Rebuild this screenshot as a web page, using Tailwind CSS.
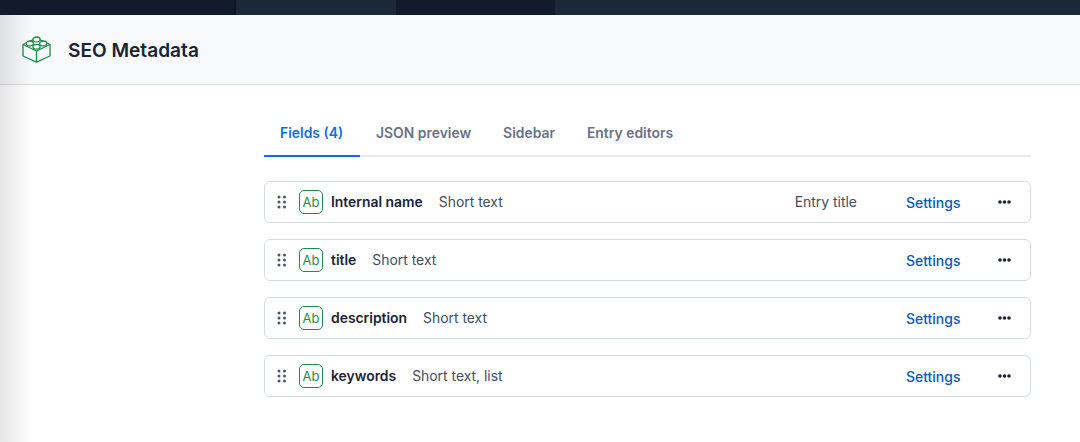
<!DOCTYPE html>
<html lang="en">
<head>
  <meta charset="UTF-8">
  <title>SEO Metadata</title>
  <script src="https://cdn.jsdelivr.net/npm/@tailwindcss/browser@4"></script>
</head>
<body class="font-['Inter',sans-serif] bg-white overflow-hidden">
  <div class="relative h-[442px] w-[1080px] overflow-hidden">
    <!-- Top nav strip -->
    <div class="flex h-[15px] bg-[#1a2838]">
      <div class="w-[236px] bg-[#111b2b] border-r-2 border-[#0c1420]"></div>
      <div class="w-[160px]"></div>
      <div class="w-[159px] bg-[#111b2b]"></div>
    </div>

    <!-- Header -->
    <header class="flex items-center h-[70px] bg-[#f7f9fa] border-b border-[#d3dce0] pl-[22px]">
      <svg class="w-[29px] h-[27px] text-[#1b8f4a]" viewBox="0 0 29 27" fill="none" stroke="currentColor" stroke-width="1.3" stroke-linejoin="round">
        <path d="M1 8.5 14.5 2 28 8.5v11.5L14.5 26.2 1 20z"/>
        <path d="M1 8.5 14.5 15 28 8.5M14.5 15v11.2"/>
        <ellipse cx="14.5" cy="3.4" rx="3.6" ry="2.4" fill="#f7f9fa"/>
        <ellipse cx="7.8" cy="7.4" rx="3.6" ry="2.4" fill="#f7f9fa"/>
        <ellipse cx="21.2" cy="7.4" rx="3.6" ry="2.4" fill="#f7f9fa"/>
        <ellipse cx="14.5" cy="10.8" rx="3.6" ry="2.4" fill="#f7f9fa"/>
      </svg>
      <h1 class="ml-[17px] text-[19.1px] font-semibold leading-7 text-[#1a2433]">SEO Metadata</h1>
    </header>

    <!-- Main column -->
    <main class="ml-[264px] w-[767px]">
      <nav class="flex h-[72px] border-b-2 border-[#e7ebee] text-[13.9px] font-semibold text-[#67728a]">
        <a class="flex items-center w-[96px] h-[72px] px-4 pt-[38px] pb-[12px] text-[#0d6fe0] border-b-2 border-[#0d6fe0]">Fields (4)</a>
        <a class="flex items-center h-[72px] px-4 pt-[38px] pb-[14px]">JSON preview</a>
        <a class="flex items-center h-[72px] px-4 pt-[38px] pb-[14px]">Sidebar</a>
        <a class="flex items-center h-[72px] px-4 pt-[38px] pb-[14px]">Entry editors</a>
      </nav>

      <div class="mt-[24px] flex flex-col gap-4">
        <div class="flex items-center h-[42px] border border-[#d3dce0] rounded-md pl-[12px]">
          <svg class="w-[10px] h-[14px] text-[#4b5568]" viewBox="0 0 10 14" fill="currentColor"><circle cx="2" cy="2" r="1.5"/><circle cx="7.5" cy="2" r="1.5"/><circle cx="2" cy="7" r="1.5"/><circle cx="7.5" cy="7" r="1.5"/><circle cx="2" cy="12" r="1.5"/><circle cx="7.5" cy="12" r="1.5"/></svg>
          <span class="ml-[12px] flex items-center justify-center w-[24px] h-[24px] pt-[2px] border border-[#1b8f4a] rounded-[5px] text-[13px] text-[#1b8f4a]">Ab</span>
          <span class="ml-[8px] text-[13.9px] font-semibold text-[#1a2433]">Internal name</span>
          <span class="ml-4 text-[13.9px] text-[#414d63]">Short text</span>
          <span class="ml-auto text-[13.9px] text-[#414d63]">Entry title</span>
          <a class="ml-[49px] text-[14px] font-medium text-[#0859c6]">Settings</a>
          <svg class="ml-[37.5px] mr-[19px] w-[13px] h-[4px] text-[#1a2433]" viewBox="0 0 13 4" fill="currentColor"><circle cx="2" cy="2" r="1.8"/><circle cx="6.5" cy="2" r="1.8"/><circle cx="11" cy="2" r="1.8"/></svg>
        </div>
        <div class="flex items-center h-[42px] border border-[#d3dce0] rounded-md pl-[12px]">
          <svg class="w-[10px] h-[14px] text-[#4b5568]" viewBox="0 0 10 14" fill="currentColor"><circle cx="2" cy="2" r="1.5"/><circle cx="7.5" cy="2" r="1.5"/><circle cx="2" cy="7" r="1.5"/><circle cx="7.5" cy="7" r="1.5"/><circle cx="2" cy="12" r="1.5"/><circle cx="7.5" cy="12" r="1.5"/></svg>
          <span class="ml-[12px] flex items-center justify-center w-[24px] h-[24px] pt-[2px] border border-[#1b8f4a] rounded-[5px] text-[13px] text-[#1b8f4a]">Ab</span>
          <span class="ml-[8px] text-[13.9px] font-semibold text-[#1a2433]">title</span>
          <span class="ml-4 text-[13.9px] text-[#414d63]">Short text</span>
          <a class="ml-auto text-[14px] font-medium text-[#0859c6]">Settings</a>
          <svg class="ml-[37.5px] mr-[19px] w-[13px] h-[4px] text-[#1a2433]" viewBox="0 0 13 4" fill="currentColor"><circle cx="2" cy="2" r="1.8"/><circle cx="6.5" cy="2" r="1.8"/><circle cx="11" cy="2" r="1.8"/></svg>
        </div>
        <div class="flex items-center h-[42px] border border-[#d3dce0] rounded-md pl-[12px]">
          <svg class="w-[10px] h-[14px] text-[#4b5568]" viewBox="0 0 10 14" fill="currentColor"><circle cx="2" cy="2" r="1.5"/><circle cx="7.5" cy="2" r="1.5"/><circle cx="2" cy="7" r="1.5"/><circle cx="7.5" cy="7" r="1.5"/><circle cx="2" cy="12" r="1.5"/><circle cx="7.5" cy="12" r="1.5"/></svg>
          <span class="ml-[12px] flex items-center justify-center w-[24px] h-[24px] pt-[2px] border border-[#1b8f4a] rounded-[5px] text-[13px] text-[#1b8f4a]">Ab</span>
          <span class="ml-[8px] text-[13.9px] font-semibold text-[#1a2433]">description</span>
          <span class="ml-4 text-[13.9px] text-[#414d63]">Short text</span>
          <a class="ml-auto text-[14px] font-medium text-[#0859c6]">Settings</a>
          <svg class="ml-[37.5px] mr-[19px] w-[13px] h-[4px] text-[#1a2433]" viewBox="0 0 13 4" fill="currentColor"><circle cx="2" cy="2" r="1.8"/><circle cx="6.5" cy="2" r="1.8"/><circle cx="11" cy="2" r="1.8"/></svg>
        </div>
        <div class="flex items-center h-[42px] border border-[#d3dce0] rounded-md pl-[12px]">
          <svg class="w-[10px] h-[14px] text-[#4b5568]" viewBox="0 0 10 14" fill="currentColor"><circle cx="2" cy="2" r="1.5"/><circle cx="7.5" cy="2" r="1.5"/><circle cx="2" cy="7" r="1.5"/><circle cx="7.5" cy="7" r="1.5"/><circle cx="2" cy="12" r="1.5"/><circle cx="7.5" cy="12" r="1.5"/></svg>
          <span class="ml-[12px] flex items-center justify-center w-[24px] h-[24px] pt-[2px] border border-[#1b8f4a] rounded-[5px] text-[13px] text-[#1b8f4a]">Ab</span>
          <span class="ml-[8px] text-[13.9px] font-semibold text-[#1a2433]">keywords</span>
          <span class="ml-4 text-[13.9px] text-[#414d63]">Short text, list</span>
          <a class="ml-auto text-[14px] font-medium text-[#0859c6]">Settings</a>
          <svg class="ml-[37.5px] mr-[19px] w-[13px] h-[4px] text-[#1a2433]" viewBox="0 0 13 4" fill="currentColor"><circle cx="2" cy="2" r="1.8"/><circle cx="6.5" cy="2" r="1.8"/><circle cx="11" cy="2" r="1.8"/></svg>
        </div>
      </div>
    </main>

    <!-- Soft shadow cast from the left edge -->
    <div class="absolute left-0 top-[15px] bottom-0 w-[32px] bg-gradient-to-r from-black/10 to-transparent pointer-events-none"></div>
  </div>
</body>
</html>
